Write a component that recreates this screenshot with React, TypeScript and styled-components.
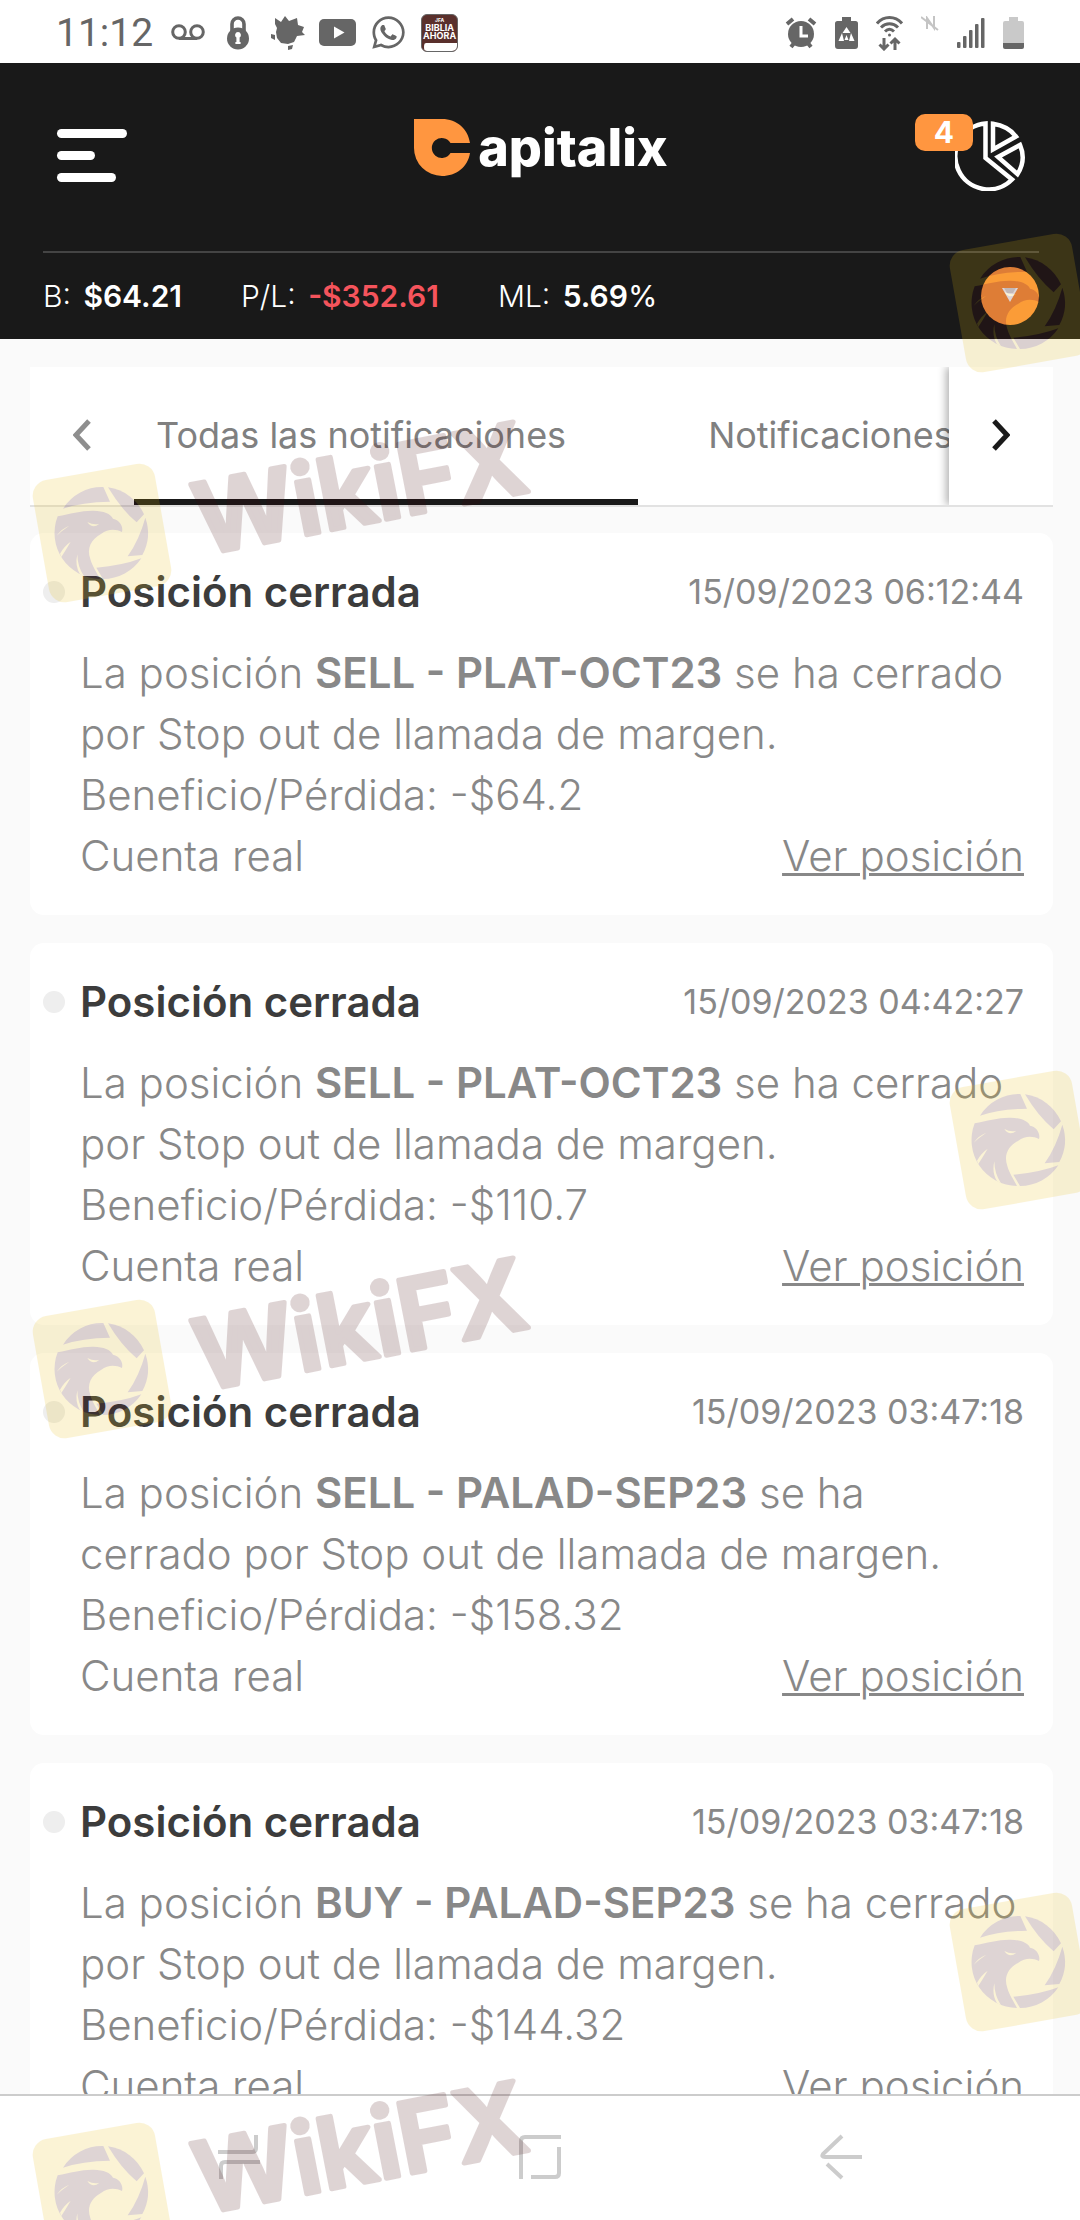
import {useState} from "react";
import styled, {createGlobalStyle} from "styled-components";
import {FaWhatsapp} from "react-icons/fa";

const notifications = [
    {id: 1, side: "SELL", symbol: "PLAT-OCT23", date: "15/09/2023 06:12:44", profit: "-$64.2"},
    {id: 2, side: "SELL", symbol: "PLAT-OCT23", date: "15/09/2023 04:42:27", profit: "-$110.7"},
    {id: 3, side: "SELL", symbol: "PALAD-SEP23", date: "15/09/2023 03:47:18", profit: "-$158.32"},
    {id: 4, side: "BUY", symbol: "PALAD-SEP23", date: "15/09/2023 03:47:18", profit: "-$144.32"},
];

const tabs = ["Todas las notificaciones", "Notificaciones no leídas"];

const StatusIcons = () => (
    <>
        <StatusGroup>
            <Clock>11:12</Clock>
            <svg width="34" height="18" viewBox="0 0 34 18" fill="none" stroke="#666" strokeWidth="3">
                <circle cx="8" cy="8" r="6.3"/>
                <circle cx="26" cy="8" r="6.3"/>
                <path d="M8 14.5h18"/>
            </svg>
            <LockIcon width="22" height="34" viewBox="0 0 22 34">
                <path d="M5 15V8a6 6 0 0 1 12 0v7" fill="none" stroke="#666" strokeWidth="3.6"/>
                <circle cx="11" cy="22.5" r="11" fill="#666"/>
                <path d="M11 16a3 3 0 0 1 1.6 5.5V26h1v2H8.400v-2h1v-4.500A3 3 0 0 1 11 16z" fill="#fff"/>
            </LockIcon>
            <svg width="34" height="34" viewBox="0 0 34 34" fill="#666">
                <path d="M4 2l6 4 4-6 4 5 8-3 1 7 6 2-2 5 3 3-8 1-3 6-6 2-7-1-4-5-1-6 1-4-2-4z"/>
                <path d="M0 18l4 1v5l-4-2zM17 30l5-1-1 4-4 1z"/>
            </svg>
            <svg width="37" height="27" viewBox="0 0 37 27">
                <rect width="37" height="27" rx="5" fill="#666"/>
                <path d="M15 7.5l10.5 6L15 19.5z" fill="#fff"/>
            </svg>
            <FaWhatsapp size={37} color="#666"/>
            <BibleIcon>
                <small>JFA</small>
                <span>BIBLIA</span>
                <span>AHORA</span>
                <i/>
            </BibleIcon>
        </StatusGroup>
        <StatusGroup $right>
            <svg width="32" height="32" viewBox="0 0 32 32">
                <circle cx="16" cy="17" r="13" fill="#666"/>
                <path d="M2 7l6-5M30 7l-6-5M6 30l4-5M26 30l-4-5" stroke="#666" strokeWidth="4"/>
                <path d="M16 9v10h7" fill="none" stroke="#fff" strokeWidth="3"/>
            </svg>
            <svg width="23" height="32" viewBox="0 0 23 32">
                <path d="M7 0h9v4h4.5A2.5 2.5 0 0 1 23 6.5V29a3 3 0 0 1-3 3H3a3 3 0 0 1-3-3V6.5A2.5 2.5 0 0 1 2.5 4H7z" fill="#666"/>
                <path d="M11.5 10l4 6h-8zM7 16l-3.5 8H9zM16 16l3.5 8H14zM11.5 18l-2 5h4z" fill="#fff"/>
            </svg>
            <svg width="27" height="36" viewBox="0 0 27 36" fill="none" stroke="#666" strokeWidth="3">
                <path d="M1 8.5C8 .5 19 .5 26 8.5M5 12.5c5-5 12-5 17 0M9 16.5c3-3 6-3 9 0"/>
                <circle cx="13.5" cy="20" r="1.5" fill="#666" stroke="none"/>
                <path d="M8 23v11M3.5 29.5L8 34l4.5-4.5M19 35V24M14.500 28.5L19 24l4.5 4.5"/>
            </svg>
            <NfcIcon width="18" height="15" viewBox="0 0 18 15" fill="none" stroke="#c4c4c4" strokeWidth="2">
                <path d="M6 13V2l7 10V0M0 1l17 13"/>
            </NfcIcon>
            <svg width="28" height="30" viewBox="0 0 28 30" fill="#666">
                <rect x="0" y="24" width="3.5" height="6" rx="1"/>
                <rect x="6" y="18" width="3.5" height="12" rx="1"/>
                <rect x="12" y="12" width="3.5" height="18" rx="1"/>
                <rect x="18" y="6" width="3.5" height="24" rx="1"/>
                <rect x="24" y="0" width="3.5" height="30" rx="1"/>
            </svg>
            <svg width="21" height="32" viewBox="0 0 21 32">
                <path d="M6 0h9v4h4a2 2 0 0 1 2 2v20H0V6a2 2 0 0 1 2-2h4z" fill="#c9c9c9"/>
                <path d="M0 26h21v4a2 2 0 0 1-2 2H2a2 2 0 0 1-2-2z" fill="#666"/>
            </svg>
        </StatusGroup>
    </>
);

const Watermark = ({right, top}: {right?: boolean; top: number}) => (
    <Mark $right={right} style={{top}} viewBox="0 0 540 200" aria-hidden="true">
        <rect x="-62" y="-62" width="124" height="124" rx="16" fill="#e8bc10" transform="translate(82 120) rotate(-10)"/>
        <g transform="translate(82 120) scale(.3333)" fill="#44060a">
            <path d="M-117 -73A138 138 0 0 1 4 -138L24 -94Q-60 -93 -117 -73z"/>
            <path d="M18 -137A138 138 0 0 1 126 -56L104 -32Q58 -70 18 -137z"/>
            <path d="M130 -46A138 138 0 0 1 121 66L77 70Q112 20 130 -46z"/>
            <path d="M118 76A138 138 0 0 1 3 138L-17 104Q60 98 118 76z"/>
            <path d="M-133 -50C-95 -58 -60 -68 -25 -67C5 -66 26 -58 33 -43C52 -40 65 -20 60 -3C40 -14 16 -12 -2 2C-32 18 -47 45 -35 78C-28 102 -16 118 -6 138A138 138 0 0 1 -133 -50z"/>
            <path d="M-44 -33Q-24 -22 -8 -28Q-28 -10 -44 -33zM-2 8Q20 -2 46 6Q18 6 -2 12zM-136 8Q-120 -14 -98 -22Q-122 -6 -136 8zM-126 62Q-114 40 -94 26Q-108 50 -122 72zM-74 64Q-74 100 -54 130L-66 124Q-82 98 -74 64z" fill="#e8bc10"/>
        </g>
        {!right && <MarkText transform="translate(182 142) rotate(-11)">WikiFX</MarkText>}
    </Mark>
);

const App = () => {
    const [active, setActive] = useState(0);

    return (
        <Screen>
            <GlobalStyle/>
            <StatusBar>
                <StatusIcons/>
            </StatusBar>
            <Header>
                <TopRow>
                    <MenuButton aria-label="Menú">
                        <MenuLine $width={70}/>
                        <MenuLine $width={38}/>
                        <MenuLine $width={59}/>
                    </MenuButton>
                    <Logo href="#">
                        <svg width="56" height="57" viewBox="0 0 56 57">
                            <path d="M0 0h28c15 0 26 10 28 24H36.5a10 10 0 1 0 0 10H56c-2 14-14 23-28 23A28 28 0 0 1 0 29z" fill="#ff9640"/>
                        </svg>
                        apitalix
                    </Logo>
                    <ChartButton aria-label="Posiciones abiertas">
                        <svg width="70" height="70" viewBox="0 0 70 70" fill="none" stroke="#fff" strokeWidth="4.5">
                            <path d="M30.5 2.500A33 33 0 1 0 57 58.5L30.5 37z"/>
                            <path d="M38 2.8V28.5L61 15.5Q53 5 38 2.8z"/>
                            <path d="M65 24L43 36l19.5 17Q71.5 39 65 24z"/>
                        </svg>
                        <Badge>4</Badge>
                    </ChartButton>
                </TopRow>
                <Stats>
                    <Stat>B: <b>$64.21</b></Stat>
                    <Stat $negative>P/L: <b>-$352.61</b></Stat>
                    <Stat>ML: <b>5.69</b><em>%</em></Stat>
                    <ExpandButton aria-label="Mostrar detalles">
                        <svg width="16" height="14" viewBox="0 0 16 14">
                            <path d="M0 0h16L8 14z" fill="#fff"/>
                            <path d="M2 0h12l-3 5H5z" fill="#ddd"/>
                        </svg>
                    </ExpandButton>
                </Stats>
            </Header>
            <Content>
                <TabBar>
                    <Arrow aria-label="Anterior" disabled>
                        <svg width="18" height="32" viewBox="0 0 18 32" fill="none" stroke="#8e8e8e" strokeWidth="5">
                            <path d="M16 2L3 16l13 14"/>
                        </svg>
                    </Arrow>
                    <TabList role="tablist">
                        {tabs.map((tab, i) => (
                            <Tab key={tab} role="tab" aria-selected={active === i} $active={active === i} onClick={() => setActive(i)}>
                                {tab}
                            </Tab>
                        ))}
                    </TabList>
                    <Arrow aria-label="Siguiente" $next>
                        <svg width="18" height="32" viewBox="0 0 18 32" fill="none" stroke="#1a1a1a" strokeWidth="5">
                            <path d="M2 2l13 14L2 30"/>
                        </svg>
                    </Arrow>
                </TabBar>
                {notifications.map(item => (
                    <Card key={item.id}>
                        <CardHead>
                            <Dot/>
                            <h2>Posición cerrada</h2>
                            <time>{item.date}</time>
                        </CardHead>
                        <CardText>
                            La posición <b>{item.side} - {item.symbol}</b> se ha cerrado por Stop out de llamada de margen.
                        </CardText>
                        <CardText>Beneficio/Pérdida: {item.profit}</CardText>
                        <CardFoot>
                            <span>Cuenta real</span>
                            <a href="#">Ver posición</a>
                        </CardFoot>
                    </Card>
                ))}
            </Content>
            <NavBar>
                <NavButton aria-label="Recientes">
                    <svg width="42" height="46" viewBox="0 0 42 46">
                        <path d="M0 18h34q4 0 4-4V1M42 28H7q-4 0-4 4v13"/>
                    </svg>
                </NavButton>
                <NavButton aria-label="Inicio">
                    <svg width="42" height="44" viewBox="0 0 42 44">
                        <path d="M42 2H6Q2 2 2 6v38M12 42h24q4 0 4-4V12"/>
                    </svg>
                </NavButton>
                <NavButton aria-label="Atrás">
                    <svg width="42" height="46" viewBox="0 0 42 46">
                        <path d="M22 2L3 20q-2 3 2 3h37M7 30l15 14"/>
                    </svg>
                </NavButton>
            </NavBar>
            <Overlay>
                <Watermark right top={183}/>
                <Watermark top={413}/>
                <Watermark right top={1020}/>
                <Watermark top={1249}/>
                <Watermark right top={1842}/>
                <Watermark top={2072}/>
            </Overlay>
        </Screen>
    );
}

const GlobalStyle = createGlobalStyle`
    * {
        box-sizing: border-box;
    }
    body {
        margin: 0;
        font-family: Inter, "Open Sans", sans-serif;
    }
    button {
        padding: 0;
        border: 0;
        background: none;
        font-family: inherit;
        cursor: pointer;
    }
`;

const Screen = styled.div`
    position: relative;
    display: flex;
    flex-direction: column;
    height: 100vh;
    overflow: hidden;
    background: #fafafa;
`;

const StatusBar = styled.div`
    display: flex;
    justify-content: space-between;
    height: 63px;
    padding: 0 56px;
    background: #fff;
`;

const StatusGroup = styled.div<{$right?: boolean}>`
    display: flex;
    align-items: center;
    column-gap: ${({$right}) => $right ? "18px" : "14px"};
    padding-top: 2px;
    svg {
        flex: none;
    }
`;

const Clock = styled.span`
    margin-right: 4px;
    font-family: Roboto, sans-serif;
    font-size: 39px;
    color: #666;
`;

const LockIcon = styled.svg`
    margin: 0 8px;
`;

const NfcIcon = styled.svg`
    align-self: flex-start;
    margin-top: 14px;
`;

const BibleIcon = styled.div`
    display: flex;
    flex-direction: column;
    align-items: center;
    width: 37px;
    height: 38px;
    border: 1px solid #666;
    border-radius: 6px;
    overflow: hidden;
    background: #5a302c;
    color: #fff;
    font-size: 9px;
    font-weight: 700;
    line-height: 8px;
    small {
        margin: 2px 0 1px;
        font-size: 5px;
        line-height: 6px;
    }
    i {
        width: 100%;
        height: 8px;
        margin-top: auto;
        border-left: 2px solid #5a302c;
        border-radius: 4px 0 0 4px;
        background: #fff;
    }
`;

const Header = styled.header`
    padding: 0 41px 0 43px;
    background: #191919;
    color: #fff;
`;

const TopRow = styled.div`
    display: flex;
    align-items: flex-start;
    justify-content: space-between;
    height: 190px;
    padding: 56px 14px 0;
    border-bottom: 2px solid #444;
`;

const MenuButton = styled.button`
    display: flex;
    flex-direction: column;
    row-gap: 13px;
    margin-top: 10px;
`;

const MenuLine = styled.span<{$width: number}>`
    width: ${({$width}) => $width}px;
    height: 9px;
    border-radius: 5px;
    background: #fff;
`;

const Logo = styled.a`
    display: flex;
    align-items: center;
    column-gap: 8px;
    color: #fff;
    font-size: 52px;
    font-weight: 800;
    line-height: 57px;
    text-decoration: none;
`;

const ChartButton = styled.button`
    position: relative;
    margin-top: 2px;
    svg {
        display: block;
    }
`;

const Badge = styled.span`
    position: absolute;
    top: -7px;
    right: 52px;
    width: 58px;
    height: 37px;
    border-radius: 10px;
    background: #ff9640;
    color: #fff;
    font-size: 30px;
    font-weight: 700;
    line-height: 37px;
`;

const Stats = styled.div`
    display: flex;
    align-items: center;
    column-gap: 59px;
    height: 86px;
`;

const Stat = styled.div<{$negative?: boolean}>`
    font-size: 30px;
    font-weight: 300;
    b {
        margin-left: 4px;
        font-weight: 600;
        color: ${({$negative}) => $negative ? "#f5545c" : "#fff"};
    }
    em {
        font-style: normal;
        font-weight: 400;
    }
`;

const ExpandButton = styled.button`
    width: 58px;
    height: 58px;
    margin-left: auto;
    border-radius: 50%;
    background: #ff9640;
`;

const Content = styled.main`
    flex: 1;
    min-height: 0;
    overflow: hidden;
    padding: 28px 27px 0 30px;
`;

const TabBar = styled.div`
    display: flex;
    height: 140px;
    margin-bottom: 26px;
    border-bottom: 2px solid #e2e2e2;
    background: #fff;
`;

const Arrow = styled.button<{$next?: boolean}>`
    flex: none;
    width: 104px;
    background: #fff;
    box-shadow: ${({$next}) => $next ? "-3px 0 8px rgba(0, 0, 0, 0.3)" : "none"};
    clip-path: inset(0 0 0 -12px);
`;

const TabList = styled.div`
    display: flex;
    flex: 1;
    min-width: 0;
    overflow: hidden;
`;

const Tab = styled.button<{$active: boolean}>`
    flex: none;
    padding: 4px 72px 0 22px;
    border-bottom: 6px solid ${({$active}) => $active ? "#191919" : "transparent"};
    color: #808080;
    font-size: 36px;
    & + & {
        padding-left: 70px;
    }
`;

const Card = styled.article`
    margin-bottom: 28px;
    padding: 28px 29px 29px 50px;
    border-radius: 14px;
    background: #fff;
    color: #888;
    font-size: 42px;
    font-weight: 300;
    line-height: 61px;
`;

const CardHead = styled.div`
    display: flex;
    align-items: center;
    justify-content: space-between;
    margin-bottom: 20px;
    h2 {
        margin: 0 auto 0 15px;
        color: #3c3c3c;
        font-size: 42px;
        font-weight: 600;
    }
    time {
        font-size: 34px;
        font-weight: 400;
    }
`;

const Dot = styled.span`
    width: 22px;
    height: 22px;
    margin-left: -37px;
    border-radius: 50%;
    background: #eee;
`;

const CardText = styled.p`
    margin: 0;
    b {
        font-weight: 600;
    }
`;

const CardFoot = styled.div`
    display: flex;
    justify-content: space-between;
    a {
        color: inherit;
        text-decoration-thickness: 3px;
    }
`;

const NavBar = styled.nav`
    display: flex;
    height: 126px;
    padding: 0 88px;
    border-top: 2px solid #ccc;
    background: #fff;
`;

const NavButton = styled.button`
    flex: 1;
    svg {
        fill: none;
        stroke: #ccc;
        stroke-width: 4;
    }
`;

const Overlay = styled.div`
    position: absolute;
    inset: 0;
    overflow: hidden;
    pointer-events: none;
`;

const Mark = styled.svg<{$right?: boolean}>`
    position: absolute;
    left: ${({$right}) => $right ? "calc(100% - 143px)" : "20px"};
    width: 540px;
    height: 200px;
    overflow: visible;
    opacity: 0.17;
`;

const MarkText = styled.text`
    fill: #44060a;
    stroke: #44060a;
    stroke-width: 5px;
    stroke-linejoin: round;
    font-size: 98px;
    font-weight: 600;
`;

export default App;
